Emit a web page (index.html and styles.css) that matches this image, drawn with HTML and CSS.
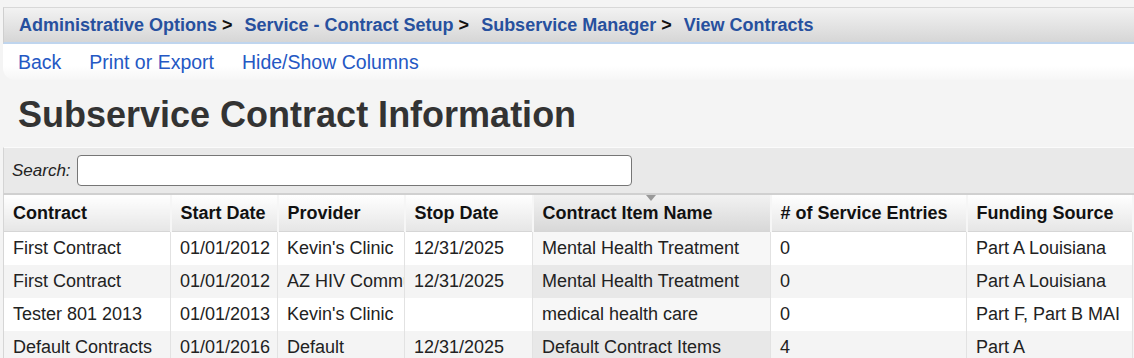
FILE: index.html
```html
<!DOCTYPE html>
<html lang="en">

<head>
    <meta charset="UTF-8">
    <title>View Contracts</title>
    <link rel="stylesheet" href="styles.css">
</head>

<body>
    <div class="page">
        <div class="breadcrumb">
            <a href="#">Administrative Options</a><span class="sep">&gt;</span>
            <a href="#">Service - Contract Setup</a><span class="sep">&gt;</span>
            <a href="#">Subservice Manager</a><span class="sep">&gt;</span>
            <a href="#">View Contracts</a>
        </div>
        <div class="toolbar">
            <a href="#">Back</a>
            <a href="#">Print or Export</a>
            <a href="#">Hide/Show Columns</a>
        </div>
        <h1 class="title">Subservice Contract Information</h1>
        <div class="search">
            <label for="searchBox">Search:</label>
            <input id="searchBox" type="text">
        </div>
        <table class="grid">
            <colgroup>
                <col style="width: 167px">
                <col style="width: 107px">
                <col style="width: 127px">
                <col style="width: 128px">
                <col style="width: 238px">
                <col style="width: 196px">
                <col style="width: 166px">
            </colgroup>
            <thead>
                <tr>
                    <th>Contract</th>
                    <th>Start Date</th>
                    <th>Provider</th>
                    <th>Stop Date</th>
                    <th class="sorted">Contract Item Name<span class="arrow"></span></th>
                    <th># of Service Entries</th>
                    <th>Funding Source</th>
                </tr>
            </thead>
            <tbody>
                <tr>
                    <td>First Contract</td>
                    <td>01/01/2012</td>
                    <td>Kevin's Clinic</td>
                    <td>12/31/2025</td>
                    <td class="sorted">Mental Health Treatment</td>
                    <td>0</td>
                    <td>Part A Louisiana</td>
                </tr>
                <tr>
                    <td>First Contract</td>
                    <td>01/01/2012</td>
                    <td>AZ HIV Commu</td>
                    <td>12/31/2025</td>
                    <td class="sorted">Mental Health Treatment</td>
                    <td>0</td>
                    <td>Part A Louisiana</td>
                </tr>
                <tr>
                    <td>Tester 801 2013</td>
                    <td>01/01/2013</td>
                    <td>Kevin's Clinic</td>
                    <td></td>
                    <td class="sorted">medical health care</td>
                    <td>0</td>
                    <td>Part F, Part B MAI</td>
                </tr>
                <tr>
                    <td>Default Contracts</td>
                    <td>01/01/2016</td>
                    <td>Default</td>
                    <td>12/31/2025</td>
                    <td class="sorted">Default Contract Items</td>
                    <td>4</td>
                    <td>Part A</td>
                </tr>
            </tbody>
        </table>
    </div>
</body>

</html>
```

FILE: styles.css
```css
body {
    margin: 0;
    background: #f4f4f4;
    font-family: "Liberation Sans", Arial, sans-serif;
    color: #222;
}

.page {
    padding: 7px 0 0 3px;
}

a {
    text-decoration: none;
}

.breadcrumb {
    height: 34px;
    display: flex;
    align-items: center;
    padding-left: 15px;
    background: linear-gradient(#f2f2f2, #d6d6d6);
    border-top: 1px solid #d8d8d8;
    border-left: 1px solid #cfcfcf;
    border-bottom: 2px solid #bfd5ee;
    font-size: 18px;
    font-weight: bold;
}

.breadcrumb a {
    color: #27509e;
}

.breadcrumb .sep {
    color: #111;
    margin: 0 12px 0 5px;
}

.toolbar {
    height: 36px;
    display: flex;
    align-items: center;
    gap: 28px;
    padding-left: 15px;
    background: linear-gradient(#ffffff 60%, #f6f6f6);
    border-bottom-left-radius: 12px;
    font-size: 19.5px;
}

.toolbar a {
    color: #2458c4;
}

.title {
    margin: 0;
    padding: 14px 15px 11px;
    font-size: 36px;
    font-weight: bold;
    color: #333;
}

.search {
    height: 45px;
    display: flex;
    align-items: center;
    padding-left: 8px;
    background: #e9e9e9;
    border-top: 1px solid #fbfbfb;
    border-left: 1px solid #d4d4d4;
    border-bottom: 2px solid #d0d0d0;
}

.search label {
    font-style: italic;
    font-size: 17px;
    margin-right: 6px;
}

.search input {
    width: 551px;
    height: 27px;
    border: 1px solid #767676;
    border-radius: 4px;
    background: #fff;
    padding: 1px;
}

.grid {
    border-collapse: collapse;
    table-layout: fixed;
    width: 1129px;
    font-size: 18px;
    border-left: 1px solid #d6d6d6;
}

.grid th {
    height: 36px;
    text-align: left;
    padding: 0 0 0 9px;
    background: linear-gradient(#ffffff, #e6e6e6);
    border-right: 2px solid #f6f6f6;
    border-bottom: 1px solid #d6d6d6;
    color: #111;
    white-space: nowrap;
    overflow: hidden;
}

.grid th.sorted {
    position: relative;
    background: linear-gradient(#f2f2f2, #d8d8d8);
}

.arrow {
    position: absolute;
    top: 0;
    left: 112px;
    border-left: 5px solid transparent;
    border-right: 5px solid transparent;
    border-top: 6px solid #999;
}

.grid td {
    height: 33px;
    padding: 0 0 0 9px;
    border-right: 1px solid #e2e2e2;
    white-space: nowrap;
    overflow: hidden;
    color: #222;
}

.grid tbody tr:nth-child(odd) td {
    background: #ffffff;
}

.grid tbody tr:nth-child(even) td {
    background: #f4f4f4;
}

.grid tbody tr:nth-child(odd) td.sorted {
    background: #f7f7f7;
}

.grid tbody tr:nth-child(even) td.sorted {
    background: #e8e8e8;
}
```
